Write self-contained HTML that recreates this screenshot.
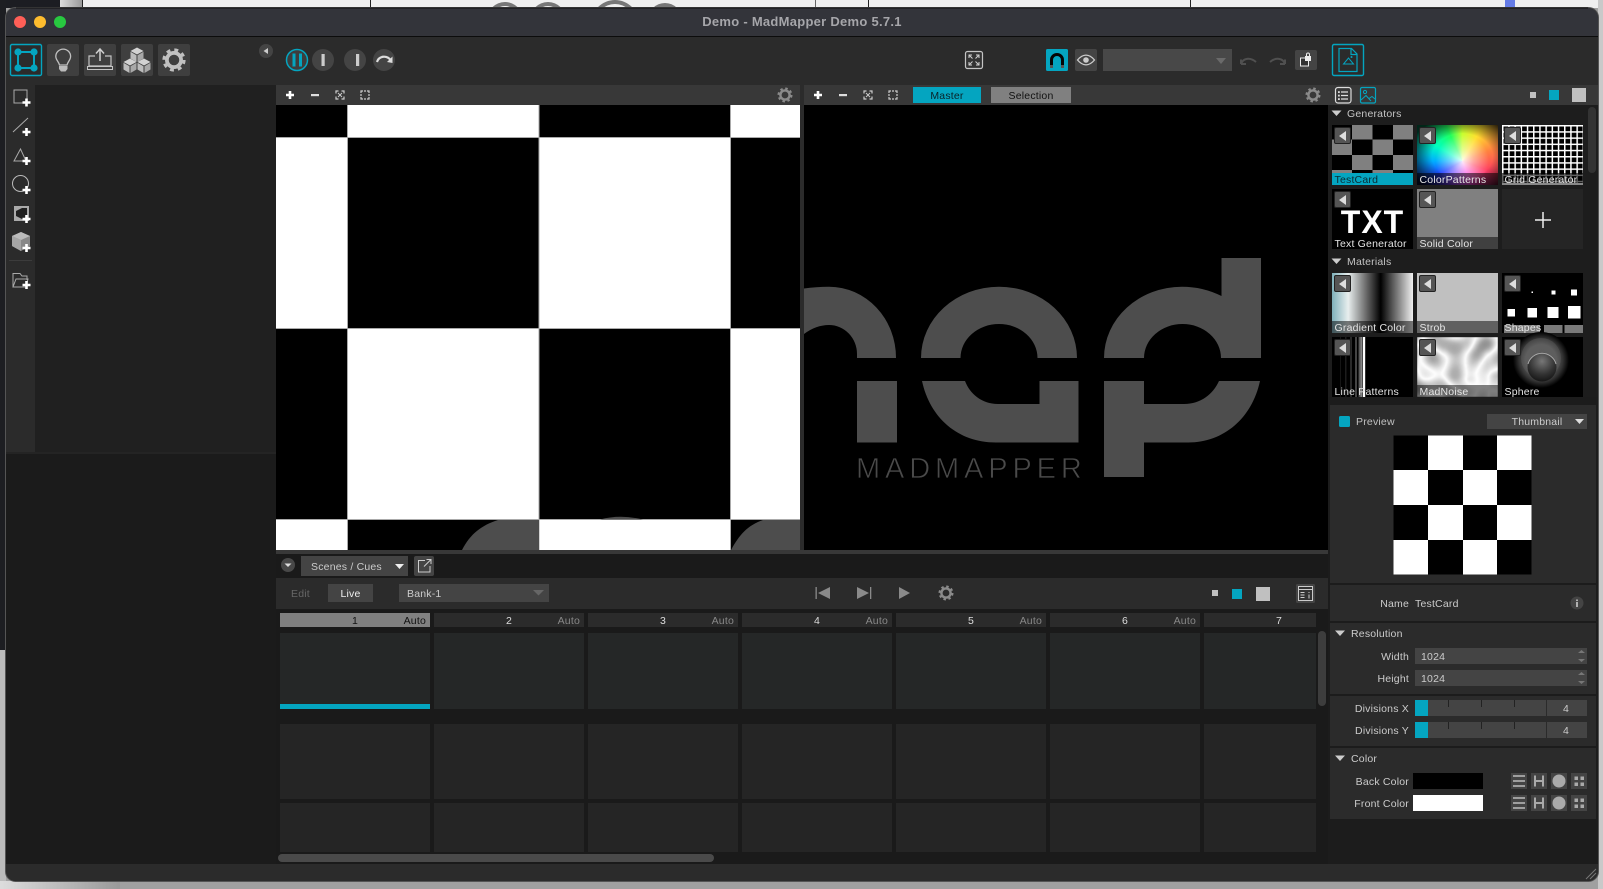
<!DOCTYPE html>
<html lang="en"><head><meta charset="utf-8"><title>Demo - MadMapper Demo 5.7.1</title>
<style>
html,body{margin:0;padding:0;background:#999;width:1603px;height:889px;overflow:hidden}
svg{display:block;position:absolute;left:0;top:0}
text{font-family:"Liberation Sans",sans-serif;font-size:10.5px;letter-spacing:.2px;fill:#ccc;white-space:pre}
.r{text-anchor:end}.c{text-anchor:middle}
.l{fill:#e4e4e4}
</style></head><body>
<svg width="1603" height="889" viewBox="0 0 1603 889" xmlns="http://www.w3.org/2000/svg">
<defs>
<linearGradient id="gc" x1="0" x2="1" y1="0" y2="0"><stop offset="0" stop-color="#7fb0ba"/><stop offset=".2" stop-color="#e8eeee"/><stop offset=".4" stop-color="#777"/><stop offset=".6" stop-color="#000"/><stop offset=".8" stop-color="#777"/><stop offset="1" stop-color="#f0f0f0"/></linearGradient>
<linearGradient id="ln" x1="0" x2="1" y1="0" y2="0"><stop offset="0" stop-color="#444"/><stop offset="1" stop-color="#999"/></linearGradient>
<linearGradient id="lg" x1="0" x2="1" y1="0" y2="0"><stop offset="0" stop-color="#ddd"/><stop offset="1" stop-color="#999"/></linearGradient>
<radialGradient id="sp" cx=".5" cy=".5" r=".5"><stop offset="0" stop-color="#555"/><stop offset=".55" stop-color="#5a5a5a"/><stop offset=".78" stop-color="#333"/><stop offset="1" stop-color="#000"/></radialGradient>
<radialGradient id="sp2" cx=".5" cy=".3" r=".75"><stop offset="0" stop-color="#777"/><stop offset=".6" stop-color="#333"/><stop offset="1" stop-color="#111"/></radialGradient>
<pattern id="gr" width="6.2" height="6.2" patternUnits="userSpaceOnUse" x="1502" y="125"><rect width="6.2" height="6.2" fill="#000"/><rect width="1.5" height="6.2" fill="#fff"/><rect width="6.2" height="1.5" fill="#fff"/></pattern>
<filter id="nz" x="0" y="0" width="100%" height="100%" color-interpolation-filters="sRGB"><feTurbulence type="fractalNoise" baseFrequency=".045" numOctaves="1" seed="7"/><feColorMatrix values="1 0 0 0 0 1 0 0 0 0 1 0 0 0 0 0 0 0 0 1"/><feComponentTransfer><feFuncR type="table" tableValues=".35 .4 .5 .62 .8 1 .85 .7 .62 .55 .5"/><feFuncG type="table" tableValues=".35 .4 .5 .62 .8 1 .85 .7 .62 .55 .5"/><feFuncB type="table" tableValues=".35 .4 .5 .62 .8 1 .85 .7 .62 .55 .5"/></feComponentTransfer><feGaussianBlur stdDeviation=".5"/></filter>
<g id="ab"><rect x="2.5" y="2.5" width="16" height="16" rx="1.5" fill="#555" stroke="#222"/><path d="M7 11 14 6V16Z" fill="#ddd"/></g>
<g id="gear"><circle r="6.2" fill="none" stroke="currentColor" stroke-width="2.6" stroke-dasharray="2.4 2.47"/><circle r="4.6" fill="none" stroke="currentColor" stroke-width="2.4"/></g>
<g id="pl"><path d="M-4-1.3H-1.3V-4H1.3V-1.3H4V1.3H1.3V4H-1.3V1.3H-4Z" fill="#fff"/></g>
<g id="tri"><path d="M-5-3H5L0 2.5Z"/></g>
<g id="fit" fill="none" stroke="#ccc" stroke-width="1.2"><path d="M-4-1.5V-4H-1.5M1.5-4H4V-1.5M4 1.5V4H1.5M-1.5 4H-4V1.5"/><path d="M-2-2 2 2M2-2-2 2" stroke-width=".9"/></g>
<g id="sel" fill="none" stroke="#ccc" stroke-width="1.2"><path d="M-4-2V-4H-2M-1-4H1M2-4H4V-2M4-1V1M4 2V4H2M1 4H-1M-2 4H-4V2M-4 1V-1"/></g>
<g id="cube"><path d="M0-7 6.5-3.5 0 0-6.5-3.5Z" fill="#d2d2d2"/><path d="M-6.5-2.7 -.5 .7V7.5L-6.5 4Z" fill="#bcbcbc"/><path d="M6.5-2.7 .5 .7V7.5L6.5 4Z" fill="#a8a8a8"/></g>
<g id="ibt"><rect width="16" height="16" fill="#444"/></g>
</defs>

<!-- outside desktop -->
<rect width="1603" height="889" fill="#a0a0a0"/>
<rect width="1603" height="8" fill="#efefef"/>
<g fill="#777"><circle cx="505" cy="20" r="18"/><circle cx="548" cy="20" r="18"/><circle cx="615" cy="24" r="24"/><circle cx="665" cy="20" r="17"/></g>
<g fill="#efefef"><circle cx="505" cy="20" r="14"/><circle cx="548" cy="20" r="14"/><circle cx="615" cy="24" r="20"/><circle cx="665" cy="20" r="13"/></g>
<rect width="60" height="8" fill="#1c1d22"/><rect x="60" width="22" height="8" fill="url(#lg)"/>
<rect x="82" width="1" height="8" fill="#222"/><rect x="370" width="1" height="8" fill="#222"/><rect x="815" width="1" height="8" fill="#666"/><rect x="868" width="1" height="8" fill="#222"/><rect x="1190" width="1" height="8" fill="#222"/>
<rect x="1505" width="10" height="8" fill="#647be6"/>
<rect width="6" height="650" fill="#1d1e22"/><rect y="650" width="6" height="239" fill="#bbb"/>
<rect x="1598" width="5" height="889" fill="#c9c9c9"/>
<rect y="881" width="120" height="8" fill="url(#lg)"/>

<!-- window -->
<rect x="5.5" y="7.5" width="1593" height="874" rx="10" fill="#2b2b2b" stroke="#555"/>
<path d="M6 36V18A10 10 0 0 1 16 8H1588A10 10 0 0 1 1598 18V36Z" fill="#33343a"/>
<rect x="16" y="7.5" width="1572" height="1" fill="#111"/>
<rect x="6" y="36" width="1592" height="1" fill="#0c0c0c"/>
<circle cx="20" cy="22" r="6" fill="#ff5f57"/><circle cx="40" cy="22" r="6" fill="#febc2e"/><circle cx="60" cy="22" r="6" fill="#28c840"/>
<text x="802" y="26" class="c" style="font-size:13px;font-weight:bold;fill:#a6a6aa;letter-spacing:.27px">Demo - MadMapper Demo 5.7.1</text>

<!-- toolbar left -->
<rect x="10.5" y="44.5" width="31" height="31" rx="1.5" fill="#2b2b2b" stroke="#04a5c0" stroke-width="1.4"/>
<path d="M18 52H34V68H18Z" fill="none" stroke="#04a5c0" stroke-width="2"/>
<g fill="#04a5c0"><circle cx="18" cy="52" r="3.6"/><circle cx="34" cy="52" r="3.6"/><circle cx="18" cy="68" r="3.6"/><circle cx="34" cy="68" r="3.6"/></g>
<rect x="47" y="44" width="32" height="32" rx="2" fill="#3f3f3f"/><rect x="84" y="44" width="32" height="32" rx="2" fill="#3f3f3f"/><rect x="121" y="44" width="32" height="32" rx="2" fill="#3f3f3f"/><rect x="158" y="44" width="32" height="32" rx="2" fill="#3f3f3f"/>
<path d="M59.5 65C59 62 55.8 60 55.8 56.5A7.4 7.4 0 1 1 70.6 56.5C70.6 60 67.5 62 67 65Z" fill="none" stroke="#c0c0c0" stroke-width="1.3"/>
<path d="M59 66H67.5V69L65.5 71.5H61L59 69Z" fill="#bbb"/>
<path d="M95 56H89V66H111V56H105" fill="none" stroke="#c4c4c4" stroke-width="1.2"/><rect x="87.5" y="66.5" width="25" height="3" fill="none" stroke="#c4c4c4"/>
<path d="M100 61V50M96 53.5 100 49 104 53.5" fill="none" stroke="#d0d0d0" stroke-width="1.5"/>
<use href="#cube" x="137" y="54.5"/><use href="#cube" x="130" y="65.5"/><use href="#cube" x="144" y="65.5"/>
<use href="#gear" transform="translate(174 60) scale(1.55)" style="color:#c0c0c0"/>
<circle cx="266" cy="51" r="7" fill="#444"/><path d="M263.5 51 268 48V54Z" fill="#ccc"/>

<!-- transport -->
<circle cx="297" cy="60" r="10.5" fill="#3d3d3d" stroke="#04a5c0" stroke-width="1.5"/><rect x="292.5" y="53.5" width="3" height="13" fill="#04a5c0"/><rect x="299" y="53.5" width="3" height="13" fill="#04a5c0"/>
<circle cx="323" cy="60" r="11" fill="#444"/><rect x="321.5" y="54" width="3.2" height="12" fill="#ccc"/>
<circle cx="355" cy="60" r="11" fill="#444"/><rect x="356" y="54" width="3.2" height="12" fill="#ccc"/>
<circle cx="384" cy="60" r="11" fill="#444"/><path d="M377 62C379 55.5 387 55 391 60.5" fill="none" stroke="#ddd" stroke-width="2.2"/><path d="M387 62 392.5 56.5 392.5 63Z" fill="#ddd"/>

<!-- toolbar right -->
<rect x="965.5" y="51.5" width="17" height="17" rx="2" fill="#333" stroke="#c4c4c4" stroke-width="1.2"/>
<path d="M969 58V55H972M969 55 972.5 58.5M979 58V55H976M979 55 975.5 58.5M969 62V65H972M969 65 972.5 61.5M979 62V65H976M979 65 975.5 61.5" fill="none" stroke="#d0d0d0"/>
<rect x="1046" y="49" width="22" height="22" rx="1.5" fill="#04a5c0"/>
<path d="M1051.5 67V60A5.5 5.5 0 0 1 1062.5 60V67" fill="none" stroke="#050505" stroke-width="3"/><rect x="1050" y="65" width="3" height="3" fill="#555"/><rect x="1061" y="65" width="3" height="3" fill="#555"/>
<rect x="1075" y="49" width="22" height="22" rx="2" fill="#444"/>
<path d="M1077.5 60C1083 53.5 1089 53.5 1094.5 60 1089 66.5 1083 66.5 1077.5 60Z" fill="none" stroke="#ccc" stroke-width="1.3"/><circle cx="1086" cy="60" r="2.8" fill="#ccc"/>
<rect x="1103" y="49" width="129" height="22" fill="#484848"/><path d="M1216 58H1226L1221 64Z" fill="#6a6a6a"/>
<path d="M1241 64C1243 58 1250 57 1256 62M1241 64V59.5M1241 64H1246" fill="none" stroke="#505050" stroke-width="2"/>
<path d="M1285 64C1283 58 1276 57 1270 62M1285 64V59.5M1285 64H1280" fill="none" stroke="#505050" stroke-width="2"/>
<rect x="1295" y="50" width="22" height="20" rx="2" fill="#444"/><rect x="1300.5" y="58" width="8" height="8" fill="#333" stroke="#eee"/><rect x="1305" y="56" width="6" height="5" fill="#eee"/><path d="M1306.5 56V54.5A1.5 1.5 0 0 1 1309.5 54.5V56" fill="none" stroke="#eee"/>
<rect x="1332.5" y="44.5" width="31" height="31" rx="1.5" fill="#2b2b2b" stroke="#04a5c0" stroke-width="1.4"/>
<path d="M1339 48.5H1351.5L1357 54V71.5H1339ZM1351 48.5V54.5H1357" fill="none" stroke="#04a5c0" stroke-width="1.2"/><path d="M1343.5 64H1353.5L1348.5 58Z" fill="none" stroke="#04a5c0"/><circle cx="1351.5" cy="57" r="1" fill="#04a5c0"/>

<!-- left panel -->
<rect x="6" y="84" width="30" height="369" fill="#2b2b2b"/>
<rect x="35" y="85" width="241" height="368" fill="#202020"/>
<rect x="6" y="453" width="270" height="411" fill="#1b1b1b"/><rect x="6" y="452" width="270" height="2" fill="#242424"/>
<rect x="14" y="90" width="13" height="13" fill="none" stroke="#aaa"/><use href="#pl" x="26.5" y="102.5"/>
<path d="M13 132 28 118" stroke="#aaa"/><use href="#pl" x="26.5" y="132"/>
<path d="M20.5 149 14 161H26Z" fill="none" stroke="#aaa"/><use href="#pl" x="26.5" y="161"/>
<circle cx="20.5" cy="183.5" r="8" fill="none" stroke="#bbb"/><use href="#pl" x="26.5" y="190"/>
<rect x="14" y="206" width="15" height="15" fill="#aaa"/><path d="M16 211 22 208H27V217L22 219 16 216Z" fill="#202020"/><use href="#pl" x="26.5" y="219"/>
<path d="M21 232 30 236V246L21 251 12 246V236Z" fill="#888"/><path d="M21 232 30 236 21 240 12 236Z" fill="#bbb"/><path d="M12 236 21 240V251L12 246Z" fill="#a5a5a5"/><use href="#pl" x="26.5" y="248"/>
<rect x="9" y="260" width="23" height="1" fill="#3c3c3c"/>
<path d="M13 287V273.5H20L22 276H27V280M13 287 16 279H28L26 287Z" fill="none" stroke="#aaa"/><use href="#pl" x="26.5" y="285"/>

<!-- viewport input -->
<rect x="276" y="85" width="524" height="20" fill="#383838"/>
<use href="#pl" x="290" y="95"/><rect x="311" y="94" width="8" height="2.2" fill="#ddd"/>
<use href="#fit" x="340" y="95"/><use href="#sel" x="365" y="95"/>
<use href="#gear" x="785" y="95" style="color:#8a8a8a"/>
<rect x="276" y="105" width="524" height="445" fill="#000"/>
<g fill="#fff"><rect x="347" y="105" width="192" height="32"/><rect x="730" y="105" width="70" height="32"/>
<rect x="276" y="137" width="71" height="191"/><rect x="539" y="137" width="191" height="191"/>
<rect x="347" y="328" width="192" height="191"/><rect x="730" y="328" width="70" height="191"/>
<rect x="276" y="519" width="71" height="31"/><rect x="539" y="519" width="191" height="31"/></g>
<g fill="#aaa"><rect x="347" y="105" width="1" height="445"/><rect x="538.5" y="105" width="1" height="445"/><rect x="730" y="105" width="1" height="445"/><rect x="276" y="137" width="524" height="1"/><rect x="276" y="328" width="524" height="1"/><rect x="276" y="519" width="524" height="1"/></g>
<g fill="#4d4d4d"><path d="M462 550C470 534 482 525 498 520H539V550Z"/><path d="M600 519.5Q620 514 643 519.5Z"/><path d="M731 550C739 535 748 525 763 520H800V550Z"/></g>

<!-- viewport master -->
<rect x="804" y="85" width="524" height="20" fill="#383838"/>
<use href="#pl" x="818" y="95"/><rect x="839" y="94" width="8" height="2.2" fill="#ddd"/>
<use href="#fit" x="868" y="95"/><use href="#sel" x="893" y="95"/>
<rect x="913" y="87" width="68" height="16" fill="#04a5c0"/><text x="947" y="99" class="c" style="fill:#0a2228">Master</text>
<rect x="991" y="87" width="80" height="16" fill="#808080"/><text x="1031" y="99" class="c" style="fill:#111">Selection</text>
<use href="#gear" x="1313" y="95" style="color:#8a8a8a"/>
<rect x="804" y="105" width="524" height="445" fill="#000"/>
<g fill="#4d4d4d">
<path d="M804 288.5Q816 286.7 829 286.7A67 71 0 0 1 896 358H857V354A28 29 0 0 0 829 325Q816 325 804 334Z"/>
<rect x="857" y="381" width="40" height="61.5"/>
<path d="M921 358A78 71.3 0 0 1 1077 358H1037.5A38.5 34 0 0 0 960.5 358Z"/>
<path d="M922 381H965C970 394 982 404 998 404H1039.5V381H1078.5V442.5H996C958 442.5 930 418 922 381Z"/>
<path d="M1104 358A78 71.3 0 0 1 1182 286.7Q1203 286.7 1221.5 296V258H1261V358H1221A38.5 34 0 0 0 1144 358Z"/>
<path d="M1104 381H1144V404H1184C1201 404 1213 394 1219 381H1260C1252 418 1224 442.5 1188 442.5H1144V477H1104Z"/>
</g>
<text x="856" y="478" textLength="226" style="font-size:29px;fill:#4a4a4a;stroke:#000;stroke-width:.7">MADMAPPER</text>

<rect x="800" y="85" width="4" height="465" fill="#2b2b2b"/>

<!-- right panel -->
<rect x="1328" y="85" width="270" height="20" fill="#383838"/>
<rect x="1328" y="105" width="270" height="300" fill="#1d1d1d"/>
<rect x="1335.5" y="87.5" width="15.5" height="15.5" rx="2.5" fill="none" stroke="#ddd" stroke-width="1.2"/><path d="M1341 92H1348M1341 95.5H1348M1341 99H1348" stroke="#ddd" stroke-width="1.3"/><rect x="1338" y="91.2" width="1.8" height="1.8" fill="#ddd"/><rect x="1338" y="94.7" width="1.8" height="1.8" fill="#ddd"/><rect x="1338" y="98.2" width="1.8" height="1.8" fill="#ddd"/>
<rect x="1360.5" y="87.5" width="15" height="15.5" rx="1.5" fill="none" stroke="#04a5c0" stroke-width="1.2"/><circle cx="1365" cy="92" r="1.6" fill="none" stroke="#04a5c0"/><path d="M1361 100 1366 95.5 1371 101M1369 98.5 1372 96.5 1375 99" fill="none" stroke="#04a5c0"/>
<rect x="1530" y="92" width="6" height="6" fill="#c0c0c0"/><rect x="1549" y="90" width="10" height="10" fill="#04a5c0"/><rect x="1572" y="88" width="14" height="14" fill="#c0c0c0"/>
<rect x="1588" y="107" width="8" height="66" rx="4" fill="#333"/>

<use href="#tri" x="1336.5" y="113.5" fill="#ccc"/><text x="1347" y="117" style="fill:#c4c4c4">Generators</text>

<!-- TestCard -->
<rect x="1332" y="125" width="81" height="60" fill="#000"/>
<g fill="#808080"><rect x="1352" y="125" width="20.5" height="14.5"/><rect x="1393" y="125" width="20" height="14.5"/><rect x="1332" y="139.500" width="20" height="15.5"/><rect x="1372.5" y="139.500" width="20.5" height="15.5"/><rect x="1352" y="155" width="20.5" height="15"/><rect x="1393" y="155" width="20" height="15"/><rect x="1332" y="170" width="20" height="3"/><rect x="1372.5" y="170" width="20.5" height="3"/></g>
<rect x="1332" y="173" width="81" height="12" fill="#04a5c0"/><use href="#ab" x="1332" y="125"/><text x="1334.5" y="183" style="fill:#0b2b33">TestCard</text>
<!-- ColorPatterns -->
<foreignObject x="1417" y="125" width="81" height="60"><div xmlns="http://www.w3.org/1999/xhtml" style="width:81px;height:60px;background:radial-gradient(circle at 56% 60%,rgba(255,255,255,.9) 0,rgba(255,255,255,.45) 20%,rgba(255,255,255,0) 46%),radial-gradient(ellipse 68% 68% at 56% 52%,rgba(0,0,0,0) 55%,rgba(0,0,0,.85) 100%),conic-gradient(from 0deg at 56% 60%,#c8ff30 0deg,#ffe030 30deg,#ff8040 70deg,#ff4060 110deg,#ff40e0 160deg,#8040ff 210deg,#2040ff 240deg,#00b0ff 270deg,#00ffc0 300deg,#20ff60 335deg,#c8ff30 360deg)"></div></foreignObject>
<rect x="1417" y="173" width="81" height="12" fill="#000" opacity=".55"/><use href="#ab" x="1417" y="125"/><text x="1419.5" y="183" class="l">ColorPatterns</text>
<!-- Grid -->
<rect x="1502" y="125" width="81" height="60" fill="url(#gr)"/>
<rect x="1502" y="173" width="81" height="12" fill="#000" opacity=".62"/><rect x="1502" y="183" width="81" height="2" fill="#888"/><use href="#ab" x="1502" y="125"/><text x="1504.5" y="183" class="l">Grid Generator</text>
<!-- Text gen -->
<rect x="1332" y="189" width="81" height="60" fill="#000"/><text x="1372.5" y="233" class="c" style="font-size:32px;font-weight:bold;fill:#fff;letter-spacing:1px">TXT</text>
<use href="#ab" x="1332" y="189"/><text x="1334.5" y="247" class="l">Text Generator</text>
<!-- Solid -->
<rect x="1417" y="189" width="81" height="48" fill="#808080"/><rect x="1417" y="237" width="81" height="12" fill="#404040"/><use href="#ab" x="1417" y="189"/><text x="1419.5" y="247" class="l">Solid Color</text>
<!-- plus -->
<rect x="1502" y="189" width="81" height="60" fill="#252525"/><path d="M1543 212V228M1535 220H1551" stroke="#eee" stroke-width="1.5"/>

<use href="#tri" x="1336.5" y="261.5" fill="#ccc"/><text x="1347" y="265" style="fill:#c4c4c4">Materials</text>

<!-- Gradient -->
<rect x="1332" y="273" width="81" height="60" fill="url(#gc)"/><rect x="1332" y="321" width="81" height="12" fill="#000" opacity=".5"/><use href="#ab" x="1332" y="273"/><text x="1334.5" y="331" class="l">Gradient Color</text>
<!-- Strob -->
<rect x="1417" y="273" width="81" height="48" fill="#c0c0c0"/><rect x="1417" y="321" width="81" height="12" fill="#606060"/><use href="#ab" x="1417" y="273"/><text x="1419.5" y="331" class="l">Strob</text>
<!-- Shapes -->
<rect x="1502" y="273" width="81" height="60" fill="#000"/>
<g fill="#fff"><rect x="1531.5" y="291.5" width="1.5" height="1.5"/><rect x="1551.5" y="290.5" width="4" height="4"/><rect x="1571" y="289.5" width="6" height="6"/><rect x="1507.5" y="309" width="7.5" height="7.5"/><rect x="1527.5" y="308" width="9.5" height="9.5"/><rect x="1547.5" y="307" width="11" height="11"/><rect x="1568" y="306" width="12.5" height="12.5"/></g>
<g fill="#7a7a7a"><rect x="1504" y="325" width="36" height="8"/><rect x="1544" y="325" width="18.5" height="8"/><rect x="1564.5" y="325" width="18.5" height="8"/></g>
<use href="#ab" x="1502" y="273"/><text x="1504.5" y="331" class="l">Shapes</text>
<!-- Line patterns -->
<rect x="1332" y="337" width="81" height="60" fill="#000"/>
<g><rect x="1340" y="337" width="1" height="60" fill="#151515"/><rect x="1345" y="337" width="1.5" height="60" fill="#1c1c1c"/><rect x="1350" y="337" width="2" height="60" fill="#2a2a2a"/><rect x="1355" y="337" width="2" height="60" fill="#444"/><rect x="1358.5" y="337" width="4" height="60" fill="url(#ln)"/><rect x="1363" y="337" width="2.2" height="60" fill="#fff"/></g>
<use href="#ab" x="1332" y="337"/><text x="1334.5" y="395" class="l">Line Patterns</text>
<!-- MadNoise -->
<rect x="1417" y="337" width="81" height="60" filter="url(#nz)"/><rect x="1417" y="385" width="81" height="12" fill="#000" opacity=".5"/><use href="#ab" x="1417" y="337"/><text x="1419.5" y="395" class="l">MadNoise</text>
<!-- Sphere -->
<rect x="1502" y="337" width="81" height="60" fill="#000"/><circle cx="1541" cy="360" r="28" fill="url(#sp)"/><circle cx="1541" cy="358" r="20" fill="#666" opacity=".35"/><circle cx="1542" cy="367" r="14.5" fill="url(#sp2)"/><path d="M1528 364A14.5 14.5 0 0 1 1556 364" fill="none" stroke="#aaa"/>
<use href="#ab" x="1502" y="337"/><text x="1504.5" y="395" class="l">Sphere</text>

<!-- sections -->
<rect x="1328" y="397" width="270" height="467" fill="#1c1c1c"/>
<rect x="1330" y="405" width="266" height="178" fill="#2b2b2b"/>
<rect x="1339" y="416" width="11" height="11" rx="1.5" fill="#04a5c0"/><text x="1356" y="425" style="fill:#c0c0c0">Preview</text>
<rect x="1487" y="414" width="100" height="15" fill="#444"/><text x="1537" y="425" class="c">Thumbnail</text><path d="M1575 419H1584L1579.5 424Z" fill="#ddd"/>
<rect x="1393.5" y="435.5" width="138" height="139" fill="#000"/>
<g fill="#fff"><rect x="1428" y="435.5" width="35" height="34.5"/><rect x="1497" y="435.5" width="34.5" height="34.5"/><rect x="1393.5" y="470" width="34.5" height="35"/><rect x="1463" y="470" width="34" height="35"/><rect x="1428" y="505" width="35" height="35"/><rect x="1497" y="505" width="34.5" height="35"/><rect x="1393.5" y="540" width="34.5" height="34.5"/><rect x="1463" y="540" width="34" height="34.5"/></g>

<rect x="1330" y="585" width="266" height="36" fill="#2b2b2b"/>
<text x="1409" y="607" class="r">Name</text><text x="1415" y="607">TestCard</text>
<circle cx="1577" cy="603" r="6.5" fill="#444"/><rect x="1576.2" y="602" width="1.6" height="5" fill="#ccc"/><rect x="1576.2" y="599.5" width="1.6" height="1.6" fill="#ccc"/>

<rect x="1330" y="623" width="266" height="71" fill="#2b2b2b"/>
<use href="#tri" x="1340" y="633.5" fill="#ccc"/><text x="1351" y="637">Resolution</text>
<text x="1409" y="660" class="r">Width</text><rect x="1415" y="648" width="172" height="16" fill="#444"/><text x="1421" y="660">1024</text><path d="M1578 653 1581.5 650 1585 653ZM1578 659 1581.5 662 1585 659Z" fill="#777"/>
<text x="1409" y="682" class="r">Height</text><rect x="1415" y="670" width="172" height="16" fill="#444"/><text x="1421" y="682">1024</text><path d="M1578 675 1581.5 672 1585 675ZM1578 681 1581.5 684 1585 681Z" fill="#777"/>

<rect x="1330" y="696" width="266" height="50" fill="#2b2b2b"/>
<text x="1409" y="712" class="r">Divisions X</text><rect x="1415" y="700" width="131" height="16" fill="#444"/><rect x="1415" y="700" width="13" height="16" fill="#04a5c0"/><path d="M1448.5 700V707M1481.5 700V707M1514.5 700V707" stroke="#222"/><rect x="1547" y="700" width="40" height="16" fill="#444"/><text x="1566" y="712" class="c">4</text>
<text x="1409" y="734" class="r">Divisions Y</text><rect x="1415" y="722" width="131" height="16" fill="#444"/><rect x="1415" y="722" width="13" height="16" fill="#04a5c0"/><path d="M1448.5 722V729M1481.5 722V729M1514.5 722V729" stroke="#222"/><rect x="1547" y="722" width="40" height="16" fill="#444"/><text x="1566" y="734" class="c">4</text>

<rect x="1330" y="748" width="266" height="71" fill="#2b2b2b"/>
<use href="#tri" x="1340" y="758.5" fill="#ccc"/><text x="1351" y="762">Color</text>
<text x="1409" y="785" class="r">Back Color</text><rect x="1413" y="773" width="70" height="16" fill="#000"/>
<text x="1409" y="807" class="r">Front Color</text><rect x="1413" y="795" width="70" height="16" fill="#fff"/>
<g id="cb">
<use href="#ibt" x="1511" y="773"/><use href="#ibt" x="1531" y="773"/><use href="#ibt" x="1551" y="773"/><use href="#ibt" x="1571" y="773"/>
<path d="M1513 776H1525M1513 781H1525M1513 786H1525" stroke="#aaa" stroke-width="1.8"/>
<path d="M1535 775.5V786.5M1543 775.5V786.5M1535 781H1543" stroke="#aaa" stroke-width="2"/>
<circle cx="1559" cy="781" r="6.5" fill="#aaa"/>
<g fill="#aaa"><rect x="1574.5" y="776.5" width="3.5" height="3.5"/><rect x="1580.5" y="776.5" width="3.5" height="3.5"/><rect x="1574.5" y="782.5" width="3.5" height="3.5"/><rect x="1580.5" y="782.5" width="3.5" height="3.5"/></g>
</g>
<use href="#cb" y="22"/>

<!-- scenes -->
<rect x="276" y="550" width="1052" height="4" fill="#383838"/>
<rect x="276" y="554" width="1052" height="310" fill="#1a1a1a"/>
<circle cx="288" cy="565" r="7" fill="#484848"/><path d="M284.5 563.5H291.5L288 567Z" fill="#ddd"/>
<rect x="301" y="556" width="107" height="20" fill="#444"/><text x="311" y="570">Scenes / Cues</text><path d="M395 564H404L399.5 569Z" fill="#eee"/>
<rect x="414" y="556" width="20" height="20" rx="2" fill="#444"/><path d="M425 560.5H418.5V572H430V566M424 566.5 431 559.5M426.5 559.5H431V564" fill="none" stroke="#ccc"/>
<rect x="276" y="578" width="1052" height="31" fill="#2b2b2b"/>
<text x="291" y="597" style="fill:#666">Edit</text>
<rect x="328" y="584" width="45" height="18" fill="#444"/><text x="350.5" y="597" class="c" style="fill:#eee">Live</text>
<rect x="399" y="584" width="150" height="18" fill="#444"/><text x="407" y="597">Bank-1</text><path d="M533 590H544L538.5 595.5Z" fill="#666"/>
<g fill="#8a8a8a"><rect x="815.5" y="587" width="1.3" height="12"/><path d="M818 593 830 587V599Z"/><path d="M857 587 869 593 857 599Z"/><rect x="870" y="587" width="1.3" height="12"/><path d="M899 587 910 593 899 599Z"/></g>
<use href="#gear" x="946" y="593" style="color:#8a8a8a"/>
<rect x="1212" y="590" width="6" height="6" fill="#c0c0c0"/><rect x="1232" y="589" width="10" height="10" fill="#04a5c0"/><rect x="1256" y="587" width="14" height="14" fill="#c0c0c0"/>
<rect x="1296" y="584" width="19" height="19" rx="1.5" fill="#444"/><rect x="1298.5" y="586.5" width="14" height="14" fill="#333" stroke="#ccc"/><path d="M1298.5 589.5H1312.5M1300.5 592.5H1304.5M1300.5 595H1304.5M1300.5 597.5H1304.5M1309 592V593M1309 594.5V598.5" stroke="#ccc" fill="none"/>

<g fill="#2b2b2b"><rect x="434" y="613" width="150" height="14"/><rect x="588" y="613" width="150" height="14"/><rect x="742" y="613" width="150" height="14"/><rect x="896" y="613" width="150" height="14"/><rect x="1050" y="613" width="150" height="14"/><rect x="1204" y="613" width="112" height="14"/></g>
<rect x="280" y="613" width="150" height="14" fill="#808080"/>
<text x="355" y="624" class="c" style="fill:#111">1</text><text x="426" y="624" class="r" style="fill:#111">Auto</text>
<text x="509" y="624" class="c" style="fill:#ddd">2</text><text x="580" y="624" class="r" style="fill:#888">Auto</text>
<text x="663" y="624" class="c" style="fill:#ddd">3</text><text x="734" y="624" class="r" style="fill:#888">Auto</text>
<text x="817" y="624" class="c" style="fill:#ddd">4</text><text x="888" y="624" class="r" style="fill:#888">Auto</text>
<text x="971" y="624" class="c" style="fill:#ddd">5</text><text x="1042" y="624" class="r" style="fill:#888">Auto</text>
<text x="1125" y="624" class="c" style="fill:#ddd">6</text><text x="1196" y="624" class="r" style="fill:#888">Auto</text>
<text x="1279" y="624" class="c" style="fill:#ddd">7</text>

<g fill="#252727"><rect x="280" y="633" width="150" height="76"/><rect x="434" y="633" width="150" height="76"/><rect x="588" y="633" width="150" height="76"/><rect x="742" y="633" width="150" height="76"/><rect x="896" y="633" width="150" height="76"/><rect x="1050" y="633" width="150" height="76"/><rect x="1204" y="633" width="112" height="76"/></g>
<rect x="280" y="704" width="150" height="5" fill="#04a5c0"/>
<g fill="#252525"><rect x="280" y="724" width="150" height="75"/><rect x="434" y="724" width="150" height="75"/><rect x="588" y="724" width="150" height="75"/><rect x="742" y="724" width="150" height="75"/><rect x="896" y="724" width="150" height="75"/><rect x="1050" y="724" width="150" height="75"/><rect x="1204" y="724" width="112" height="75"/>
<rect x="280" y="803" width="150" height="49"/><rect x="434" y="803" width="150" height="49"/><rect x="588" y="803" width="150" height="49"/><rect x="742" y="803" width="150" height="49"/><rect x="896" y="803" width="150" height="49"/><rect x="1050" y="803" width="150" height="49"/><rect x="1204" y="803" width="112" height="49"/></g>
<rect x="1318" y="631" width="8" height="75" rx="4" fill="#3d3d3d"/>
<rect x="278" y="854" width="436" height="8" rx="4" fill="#4a4a4a"/>

<!-- bottom bar -->
<path d="M6 864H1598V871A10 10 0 0 1 1588 881H16A10 10 0 0 1 6 871Z" fill="#2b2b2b"/>
<path d="M1586 879 1596 869M1590 879 1596 873" stroke="#777"/>
</svg>
</body></html>
